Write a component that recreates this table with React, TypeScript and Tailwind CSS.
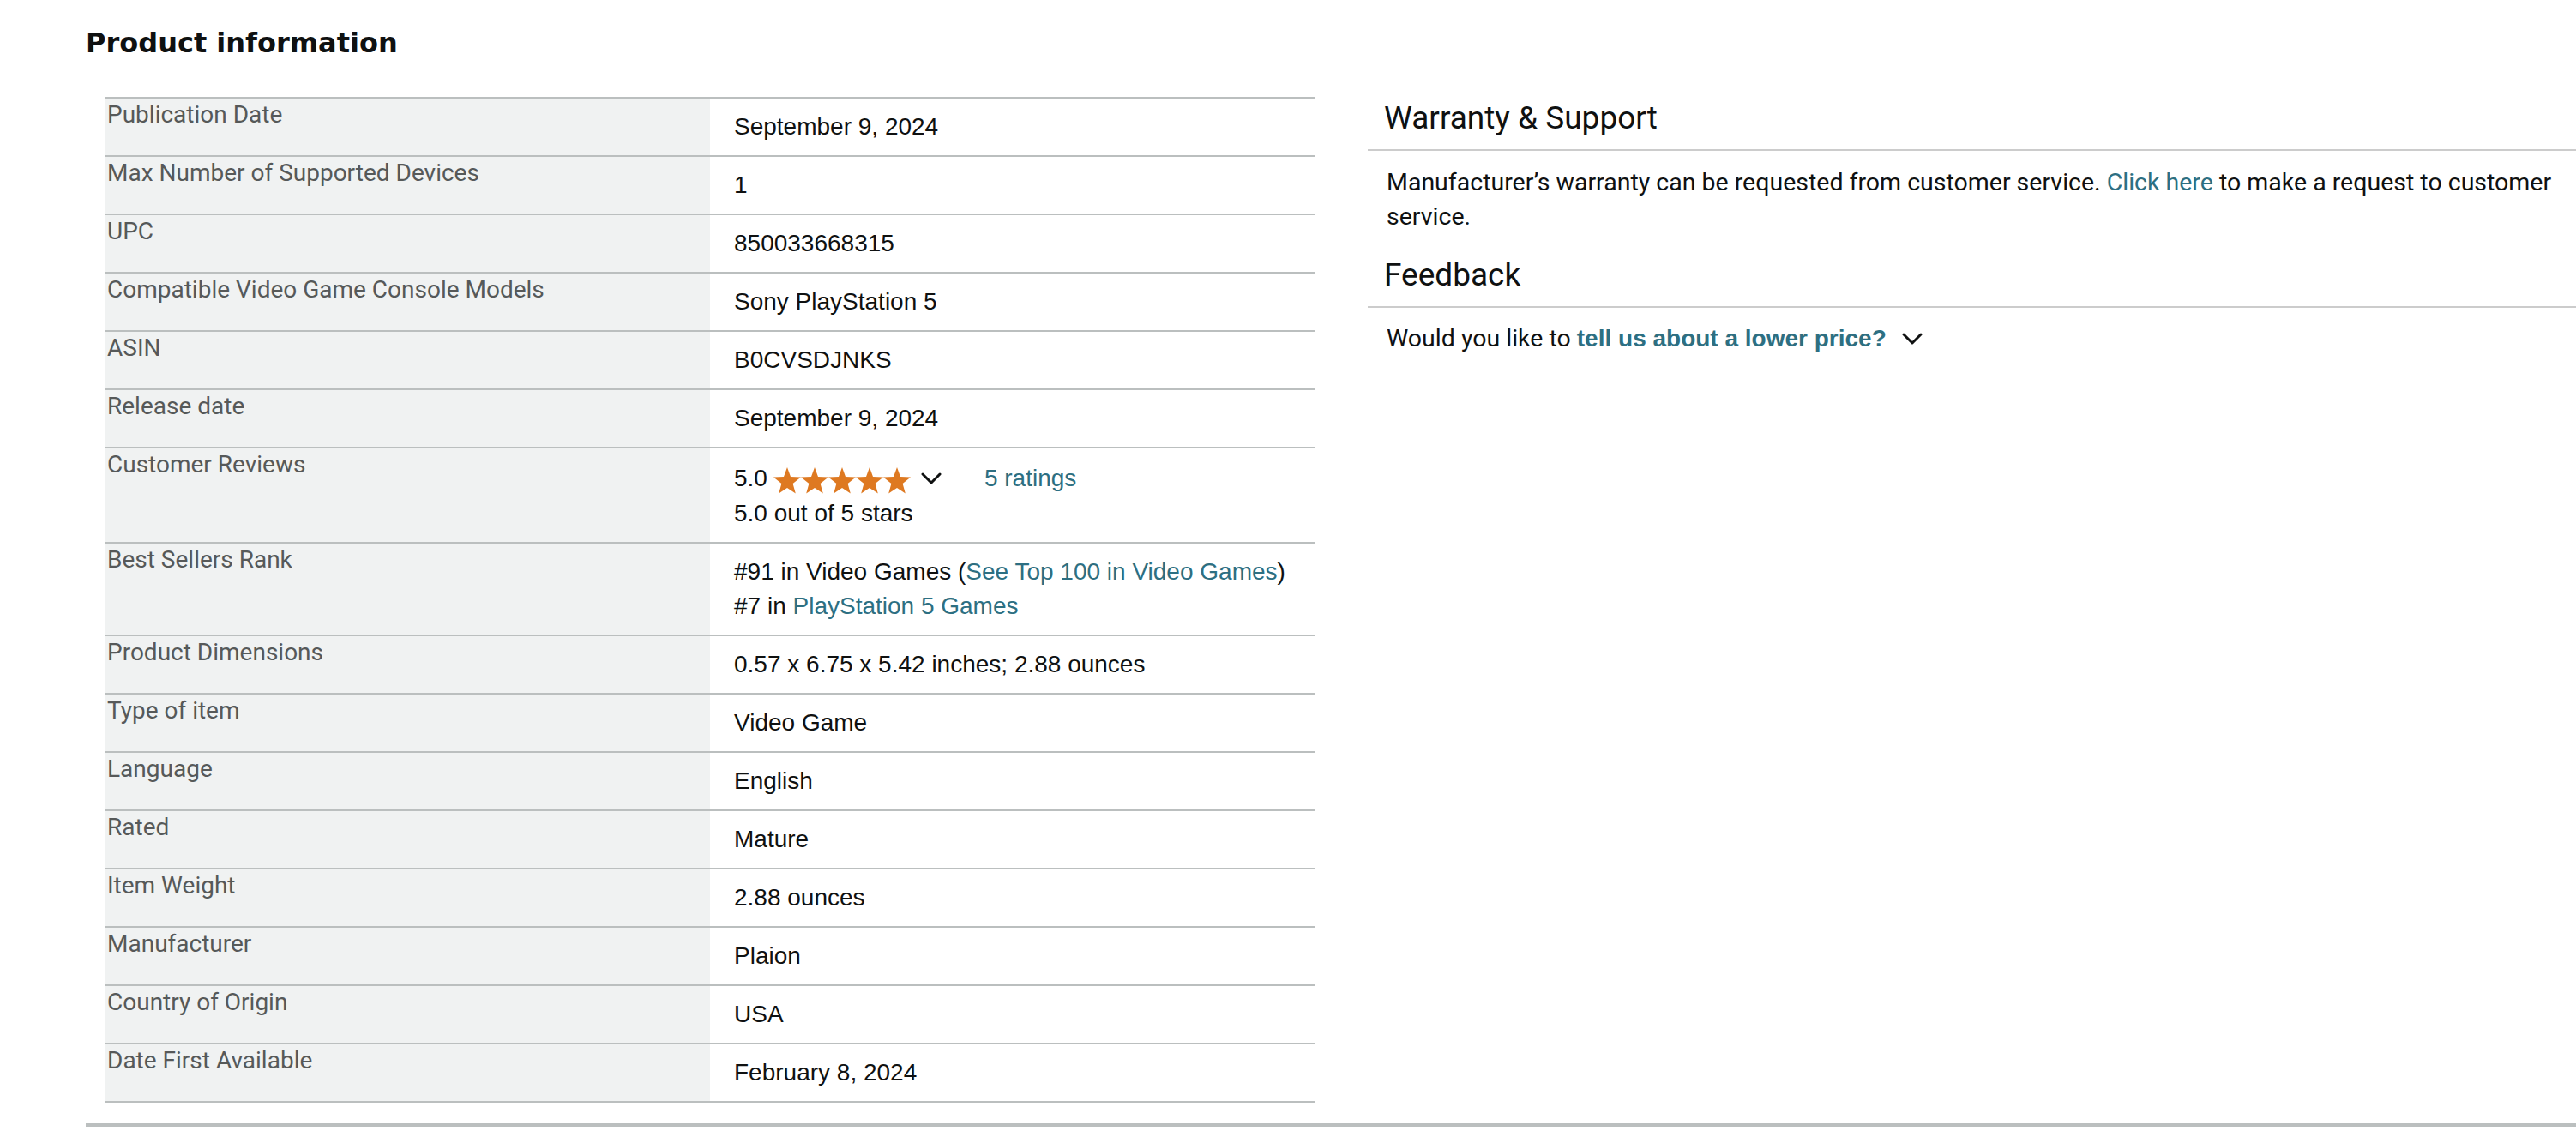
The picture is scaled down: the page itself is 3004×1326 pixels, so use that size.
import React from 'react';

type Row = {
  label: string;
  value: React.ReactNode;
};

const labelFont = { fontFamily: 'Roboto, "Noto Sans", sans-serif' };

const Chevron = ({ className = '' }: { className?: string }) => (
  <svg viewBox="0 0 24 14" className={className} fill="none">
    <polyline points="2,2 12,12 22,2" stroke="#0f1111" strokeWidth="3" strokeLinecap="round" strokeLinejoin="round" />
  </svg>
);

const Star = ({ x }: { x: number }) => (
  <polygon
    transform={`translate(${x},0)`}
    points="16,0 20,10.9 32,11.5 22.6,19 25.8,30.5 16,24 6.2,30.5 9.4,19 0,11.5 12,10.9"
    fill="#de7921"
  />
);

const Stars = () => (
  <svg width="161" height="31" viewBox="0 0 161 31" className="mt-[6px]">
    {[0, 32, 64, 96, 128].map((x) => (
      <Star key={x} x={x} />
    ))}
  </svg>
);

const Link = ({ children, bold = false }: { children: React.ReactNode; bold?: boolean }) => (
  <span className={bold ? 'text-[#2d6f82] font-bold' : 'text-[#2d6f82]'}>{children}</span>
);

const rows: Row[] = [
  { label: 'Publication Date', value: 'September 9, 2024' },
  { label: 'Max Number of Supported Devices', value: '1' },
  { label: 'UPC', value: '850033668315' },
  { label: 'Compatible Video Game Console Models', value: 'Sony PlayStation 5' },
  { label: 'ASIN', value: 'B0CVSDJNKS' },
  { label: 'Release date', value: 'September 9, 2024' },
  {
    label: 'Customer Reviews',
    value: (
      <div>
        <div className="flex items-center h-[43px]">
          <span>5.0</span>
          <span className="ml-[7px]">
            <Stars />
          </span>
          <Chevron className="ml-[11px] w-[24px] h-[14px]" />
          <span className="ml-[50px]">
            <Link>5 ratings</Link>
          </span>
        </div>
        <div>5.0 out of 5 stars</div>
      </div>
    ),
  },
  {
    label: 'Best Sellers Rank',
    value: (
      <div>
        <div>
          #91 in Video Games (<Link>See Top 100 in Video Games</Link>)
        </div>
        <div>
          #7 in <Link>PlayStation 5 Games</Link>
        </div>
      </div>
    ),
  },
  { label: 'Product Dimensions', value: '0.57 x 6.75 x 5.42 inches; 2.88 ounces' },
  { label: 'Type of item', value: 'Video Game' },
  { label: 'Language', value: 'English' },
  { label: 'Rated', value: 'Mature' },
  { label: 'Item Weight', value: '2.88 ounces' },
  { label: 'Manufacturer', value: 'Plaion' },
  { label: 'Country of Origin', value: 'USA' },
  { label: 'Date First Available', value: 'February 8, 2024' },
];

const DetailsTable = () => (
  <div className="ml-[23px] w-[1410px] border-b-2 border-[#bbbfbf]">
    {rows.map((row) => (
      <div key={row.label} className="grid grid-cols-2 border-t-2 border-[#bbbfbf]">
        <div
          className="bg-[#f0f2f2] text-[#565959] text-[28px] leading-[34px] pt-[2px] pl-[2px]"
          style={labelFont}
        >
          {row.label}
        </div>
        <div className="flex items-center pl-[28px] py-[13px] text-[28px] leading-[40px] text-[#0f1111]">
          {row.value}
        </div>
      </div>
    ))}
  </div>
);

const SideHeading = ({ children }: { children: React.ReactNode }) => (
  <div className="border-b-2 border-[#cccccc]">
    <h3 className="pl-[19px] text-[37px] leading-[44px] text-[#0f1111] mb-[14px]" style={labelFont}>
      {children}
    </h3>
  </div>
);

const App = () => {
  return (
    <div className="min-h-screen bg-white pl-[100px] font-['Liberation_Sans',Arial,sans-serif] text-[#0f1111]">
      <h2 className="pt-[30px] text-[32px] leading-[40px] font-bold text-[#0f1111] font-['DejaVu_Sans',sans-serif]">
        Product information
      </h2>

      <div className="flex mt-[43px]">
        <div className="w-[1495px] shrink-0">
          <DetailsTable />
        </div>

        <div className="flex-1 pt-[3px]">
          <SideHeading>Warranty &amp; Support</SideHeading>
          <p className="pl-[22px] pr-[20px] pt-[17px] text-[28.5px] leading-[40px] text-[#0f1111]" style={labelFont}>
            Manufacturer’s warranty can be requested from customer service. <Link>Click here</Link> to make a
            request to customer service.
          </p>

          <div className="mt-[26px]">
            <SideHeading>Feedback</SideHeading>
          </div>
          <div className="pl-[22px] pt-[16px] flex items-center text-[28px] leading-[40px]">
            <span>
              <span className="text-[28.5px]" style={labelFont}>
                Would you like to{' '}
              </span>
              <Link bold>tell us about a lower price?</Link>
            </span>
            <Chevron className="ml-[18px] w-[24px] h-[14px]" />
          </div>
        </div>
      </div>

      <div className="mt-[24px] h-[4px] bg-[#bbbfbf]" />
    </div>
  );
};

export default App;
